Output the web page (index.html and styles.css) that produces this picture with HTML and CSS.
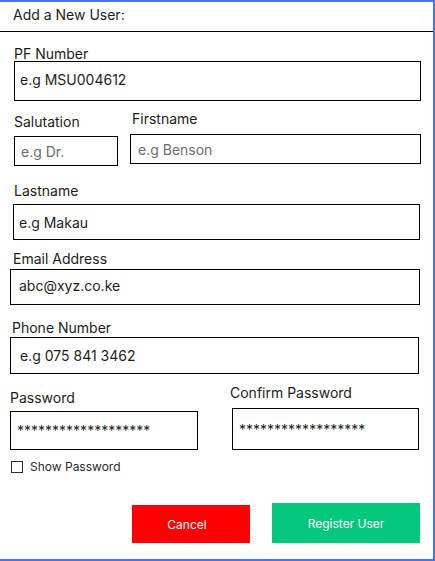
FILE: index.html
```html
<!DOCTYPE html>
<html lang="en">
<head>
<meta charset="utf-8">
<title>Add a New User</title>
<link rel="stylesheet" href="styles.css">
</head>
<body>
<div class="panel">
  <div class="panel-header">Add a New User:</div>
  <div class="form">
    <div class="field field-pf">
      <div class="label">PF Number</div>
      <div class="input input-pf dark">e.g MSU004612</div>
    </div>

    <div class="row row-names">
      <div class="col col-sal">
        <div class="label">Salutation</div>
        <div class="input input-sal muted">e.g Dr.</div>
      </div>
      <div class="col col-first">
        <div class="label label-first">Firstname</div>
        <div class="input input-first muted">e.g Benson</div>
      </div>
    </div>

    <div class="field field-last">
      <div class="label label-last">Lastname</div>
      <div class="input input-last dark">e.g Makau</div>
    </div>

    <div class="field field-email">
      <div class="label label-email">Email Address</div>
      <div class="input input-email dark">abc@xyz.co.ke</div>
    </div>

    <div class="field field-phone">
      <div class="label label-phone">Phone Number</div>
      <div class="input input-phone dark">e.g 075 841 3462</div>
    </div>

    <div class="row row-pass">
      <div class="col col-pass">
        <div class="label">Password</div>
        <div class="input input-pass dark">*******************</div>
      </div>
      <div class="col col-confirm">
        <div class="label">Confirm Password</div>
        <div class="input input-confirm dark">******************</div>
      </div>
    </div>

    <div class="show-pass">
      <span class="checkbox"></span>
      <span class="show-text">Show Password</span>
    </div>

    <div class="actions">
      <div class="btn btn-cancel">Cancel</div>
      <div class="btn btn-register">Register User</div>
    </div>
  </div>
</div>
</body>
</html>
```

FILE: styles.css
```css
* { box-sizing: border-box; }

html, body {
  margin: 0;
  padding: 0;
  background: #ffffff;
}

body {
  font-family: Inter, "Noto Sans", "Liberation Sans", sans-serif;
  color: #1c1c1c;
}

.panel {
  width: 435px;
  height: 561px;
  border-top: 2px solid #4a72ee;
  border-right: 2px solid #4a72ee;
  border-bottom: 2px solid #4a72ee;
  background: #ffffff;
  display: flex;
  flex-direction: column;
}

.panel-header {
  font-size: 14px;
  line-height: 17px;
  padding: 4px 0 8px 13px;
  border-bottom: 1px solid #000000;
  color: #1c1c1c;
}

.form {
  display: flex;
  flex-direction: column;
}

.label {
  font-size: 14px;
  line-height: 14px;
  color: #1c1c1c;
  white-space: nowrap;
}

.input {
  border: 1px solid #000000;
  font-size: 14px;
  line-height: 17px;
  display: flex;
  align-items: center;
  white-space: nowrap;
}

.dark { color: #1e1e1e; }
.muted { color: #6c6c6c; }

/* PF number */
.field-pf { margin: 15px 0 0 14px; }
.input-pf { width: 407px; height: 40px; padding: 0 0 4px 5px; }

/* Salutation / Firstname */
.row { display: flex; align-items: flex-start; }
.row-names { margin: 11px 0 0 14px; gap: 12px; }
.col-sal { padding-top: 3px; }
.col-sal .label { margin-bottom: 7px; }
.input-sal { width: 104px; height: 30px; padding-left: 6px; }
.label-first { padding-left: 2px; margin-bottom: 8px; }
.input-first { width: 291px; height: 30px; padding-left: 7px; }

/* Lastname */
.field-last { margin: 18px 0 0 13px; }
.label-last { padding-left: 1px; margin-bottom: 6px; }
.input-last { width: 407px; height: 36px; padding-left: 5px; }

/* Email */
.field-email { margin: 12px 0 0 10px; }
.label-email { padding-left: 3px; margin-bottom: 3px; }
.input-email { width: 410px; height: 36px; padding: 0 0 4px 8px; }

/* Phone */
.field-phone { margin: 16px 0 0 10px; }
.label-phone { padding-left: 2px; margin-bottom: 2px; }
.input-phone { width: 409px; height: 37px; padding-left: 9px; }

/* Passwords */
.row-pass { margin: 12px 0 0 10px; gap: 32px; }
.col-pass { padding-top: 5px; }
.col-pass .label { margin-bottom: 6px; }
.input-pass { width: 188px; height: 39px; padding-left: 6px; }
.col-confirm .label { margin-bottom: 8px; }
.input-confirm { width: 187px; height: 42px; margin-left: 2px; padding-left: 6px; }

/* Show password */
.show-pass {
  margin: 11px 0 0 11px;
  display: flex;
  align-items: center;
  gap: 7px;
}
.checkbox {
  width: 12px;
  height: 12px;
  border: 1px solid #2a2a2a;
  background: #ffffff;
}
.show-text {
  font-size: 12px;
  line-height: 12px;
  color: #2a2a2a;
}

/* Buttons */
.actions {
  margin: 30px 13px 0 0;
  display: flex;
  justify-content: flex-end;
  align-items: flex-end;
  gap: 22px;
}
.btn {
  color: #ffffff;
  font-size: 12px;
  display: flex;
  align-items: center;
  justify-content: center;
}
.btn-cancel {
  width: 118px;
  height: 38px;
  background: #ff0000;
  padding-right: 8px;
}
.btn-register {
  width: 148px;
  height: 40px;
  background: #02c77d;
}
```
